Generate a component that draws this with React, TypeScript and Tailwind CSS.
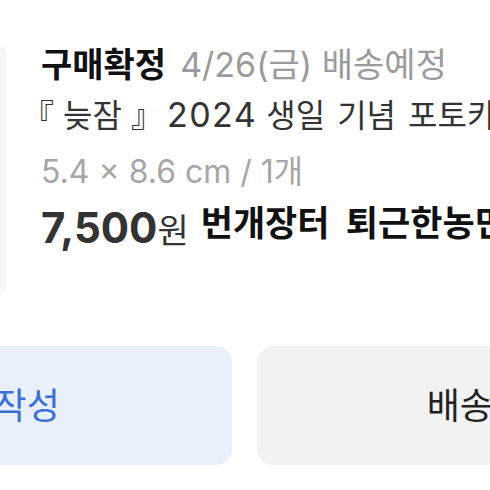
import React from 'react';

const font = { fontFamily: 'Inter, "Noto Sans CJK KR", sans-serif' };

const OrderCard: React.FC = () => {
  return (
    <div className="flex items-start pt-[47px]">
      <div className="w-[6px] h-[246px] shrink-0 rounded-r-[8px] bg-[#f6f6f6]" />
      <div className="ml-[35px] flex flex-col whitespace-nowrap">
        <div className="flex items-baseline gap-[14px] h-[36px]">
          <span className="text-[34px] font-bold text-[#111] leading-[36px]">구매확정</span>
          <span className="text-[34px] text-[#9b9b9b] leading-[36px]">4/26(금) 배송예정</span>
        </div>
        <div className="mt-[14px] text-[32px] text-[#333] leading-[36px]">
          <span className="ml-[-19px]">『</span> 늦잠 』
          <span className="ml-[4px] text-[34px] tracking-[1.5px]">2024</span>{' '}
          <span className="[word-spacing:3px]">생일 기념 포토카드 세트</span>
        </div>
        <div className="mt-[20px] text-[32px] text-[#a6a6a6] leading-[36px]">5.4 × 8.6 cm / 1개</div>
        <div className="mt-[14px] flex items-baseline gap-[12px]">
          <span className="text-[#333] leading-[48px]">
            <span className="text-[42px] font-bold">7,500</span>
            <span className="text-[34px]">원</span>
          </span>
          <span className="relative top-[-7px] text-[35px] font-bold text-[#111] [word-spacing:8px]">
            번개장터 퇴근한농민
          </span>
        </div>
      </div>
    </div>
  );
};

const Actions: React.FC = () => {
  return (
    <div className="mt-[53px] flex gap-[25px] ml-[-255px]">
      <button className="w-[487px] h-[119px] shrink-0 rounded-[16px] bg-[#e9f0fc] text-[36px] text-[#3b71d4]">
        후기 작성
      </button>
      <button className="w-[472px] h-[119px] shrink-0 rounded-[16px] bg-[#f2f2f2] text-[36px] text-[#222]">
        배송조회
      </button>
    </div>
  );
};

export default function App() {
  return (
    <div className="w-[490px] h-[490px] overflow-hidden bg-white" style={font}>
      <OrderCard />
      <Actions />
    </div>
  );
}
